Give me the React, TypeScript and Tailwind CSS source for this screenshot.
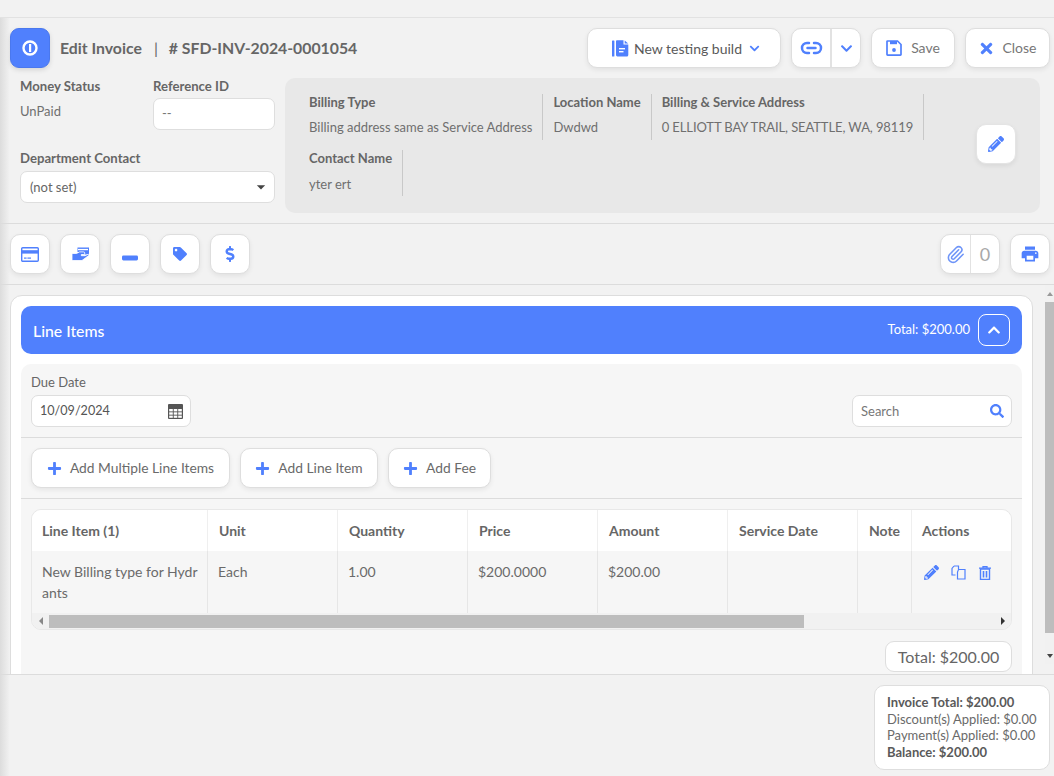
import React from "react";
import { FaPencilAlt, FaPlus, FaSearch, FaTag, FaDollarSign, FaChevronUp, FaChevronDown, FaTimes } from "react-icons/fa";
import { MdArrowDropDown, MdPrint } from "react-icons/md";
import { Paperclip } from "lucide-react";

const blue = "text-[#5080fd]";
const btn = "flex items-center justify-center bg-white border border-[#dedede] rounded-[10px] shadow-[0_2px_5px_rgba(0,0,0,0.07)]";

function Field({ label, value, gap = "mt-[8px]", extra = "" }: { label: string; value: string; gap?: string; extra?: string }) {
  return (
    <div className="h-[46px] pr-[10px] mr-[10px] border-r border-[#c8c8c8]">
      <div className="font-bold text-[13px] leading-[17px] text-[#666]">{label}</div>
      <div className={`${gap} ${extra} text-[13px] leading-[17px] text-[#6f6f6f]`}>{value}</div>
    </div>
  );
}

function Th({ w, children, pl = "pl-[11px]", last }: { w: string; children: React.ReactNode; pl?: string; last?: boolean }) {
  return (
    <div className={`${w} ${pl} shrink-0 h-full flex items-center font-bold text-[14px] text-[#666] ${last ? "" : "border-r border-[#efefef]"}`}>{children}</div>
  );
}

function Td({ w, children, last }: { w: string; children?: React.ReactNode; last?: boolean }) {
  return (
    <div className={`${w} shrink-0 h-full pl-[10px] pt-[10px] text-[14px] leading-[21px] text-[#6a6a6a] ${last ? "" : "border-r border-[#e6e6e6]"}`}>{children}</div>
  );
}

export default function App() {
  return (
    <div className="relative w-[1054px] h-[776px] overflow-hidden bg-[#f2f2f2] flex flex-col font-['Lato',sans-serif] text-[#666]">
      <div className="h-[18px] shrink-0 border-b border-[#e2e2e2]" />

      <div className="h-[206px] shrink-0 border-b border-[#dcdcdc] pl-[10px] pr-[4px]">
        <div className="flex items-start pt-[10px]">
          <div className="w-[40px] h-[40px] rounded-[9px] bg-[#5080fd] border border-[#4a78ee] flex items-center justify-center text-white shadow-[0_2px_5px_rgba(0,0,0,0.12)]">
            <svg width="16" height="16" viewBox="0 0 16 16"><circle cx="8" cy="8" r="6.5" fill="none" stroke="#fff" strokeWidth="2.4" /><rect x="7" y="4" width="2.2" height="8" fill="#fff" /></svg>
          </div>
          <div className="ml-[10px] h-[40px] flex items-center font-bold text-[15.8px] text-[#666] whitespace-pre">Edit Invoice<span className="ml-[12px] mr-[11px] font-normal">|</span># SFD-INV-2024-0001054</div>
          <div className="ml-auto flex gap-[10px]">
            <div className={`${btn} w-[194px] h-[40px] !justify-start pl-[24px] text-[14px] text-[#5a5a5a]`}>
              <svg width="17" height="17" viewBox="0 0 17 17" className={blue} fill="currentColor"><rect x="0" y="0.5" width="2.4" height="16" rx="0.6" /><path d="M4 1.2a.9.9 0 0 1 .9-.9h6.6v4.2h4.8v10.4a1.5 1.5 0 0 1-1.5 1.5H5.4a1.4 1.4 0 0 1-1.4-1.4z" /><path d="M12.7.5l3.5 3h-3.5z" /><rect x="7" y="8" width="6" height="1.4" fill="#fff" /><rect x="7" y="11" width="4.5" height="1.4" fill="#fff" /></svg>
              <span className="ml-[5px] mt-[1px]">New testing build</span>
              <FaChevronDown className={`${blue} text-[11px] ml-[7px]`} />
            </div>
            <div className={`${btn} w-[70px] h-[40px]`}>
              <div className="w-[40px] h-full flex items-center justify-center border-r-2 border-[#e2e2e2]">
                <svg width="23" height="14" viewBox="0 0 23 14" fill="none" stroke="currentColor" strokeWidth="2.5" strokeLinecap="round" className={blue}><path d="M9 2H7a5 5 0 0 0 0 10h2" /><path d="M14 2h2a5 5 0 0 1 0 10h-2" /><path d="M7.5 7h8" /></svg>
              </div>
              <div className="flex-1 flex items-center justify-center"><FaChevronDown className={`${blue} text-[13px]`} /></div>
            </div>
            <div className={`${btn} w-[84px] h-[40px] gap-[9px] text-[14px] text-[#777]`}>
              <svg width="16" height="16" viewBox="0 0 16 16" className={blue}><path d="M1.5 1h10l3.5 3.5v10a.6.6 0 0 1-.6.6H1.6a.6.6 0 0 1-.6-.6V1.5A.5.5 0 0 1 1.5 1z" fill="none" stroke="currentColor" strokeWidth="1.7" /><rect x="4" y="1" width="7" height="3.2" fill="currentColor" /><circle cx="8" cy="10" r="1.9" fill="currentColor" /></svg>
              <span className="-mt-[2px]">Save</span>
            </div>
            <div className={`${btn} w-[85px] h-[40px] gap-[7px] text-[14px] text-[#777]`}><FaTimes className={`${blue} text-[17px]`} /><span className="-mt-[2px]">Close</span></div>
          </div>
        </div>

        <div className="flex mt-[10px]">
          <div className="w-[265px] shrink-0 pl-[10px] grid grid-cols-[133px_122px] grid-rows-[72px_62px]">
            <div>
              <div className="font-bold text-[13.15px] leading-[17px] text-[#666]">Money Status</div>
              <div className="mt-[8px] text-[13px] leading-[17px] text-[#6f6f6f]">UnPaid</div>
            </div>
            <div>
              <div className="font-bold text-[13.15px] leading-[17px] text-[#666]">Reference ID</div>
              <div className="mt-[3px] h-[32px] bg-white border border-[#dedede] rounded-[7px] flex items-center pl-[8px] text-[13px] text-[#777]">--</div>
            </div>
            <div className="col-span-2">
              <div className="font-bold text-[13.15px] leading-[17px] text-[#666]">Department Contact</div>
              <div className="mt-[4px] h-[32px] bg-white border border-[#dedede] rounded-[7px] flex items-center pl-[9px] pr-[3px] text-[13px] text-[#666]">
                <span className="mt-[1px]">(not set)</span><MdArrowDropDown className="ml-auto text-[20px] text-[#444]" />
              </div>
            </div>
          </div>
          <div className="ml-[10px] w-[755px] h-[135px] bg-[#e8e8e8] rounded-[10px] flex items-center pl-[24px] pr-[24px]">
            <div className="flex-1 h-full pt-[16px]">
              <div className="flex">
                <Field label="Billing Type" value="Billing address same as Service Address" />
                <Field label="Location Name" value="Dwdwd" />
                <Field label="Billing & Service Address" value="0 ELLIOTT BAY TRAIL, SEATTLE, WA, 98119" extra="tracking-[-0.1px]" />
              </div>
              <div className="flex mt-[10px]">
                <Field label="Contact Name" value="yter ert" gap="mt-[9px]" />
              </div>
            </div>
            <div className={`${btn} shrink-0 w-[40px] h-[40px] border-[#e4e4e4] -mt-[3px]`}><FaPencilAlt className={`${blue} text-[16px]`} /></div>
          </div>
        </div>
      </div>

      <div className="h-[61px] shrink-0 border-b border-[#dcdcdc] flex items-center pl-[10px] pr-[4px] gap-[10px]">
        <div className={`${btn} w-[40px] h-[40px]`}>
          <svg width="18" height="15" viewBox="0 0 18 15" className={blue}><rect x="0.7" y="0.7" width="16.6" height="13.6" rx="1" fill="none" stroke="currentColor" strokeWidth="1.4" /><rect x="1" y="3.2" width="16" height="3.4" fill="currentColor" /><rect x="3" y="10.5" width="2.6" height="1.2" fill="currentColor" /><rect x="6.4" y="10.5" width="3.6" height="1.2" fill="currentColor" /></svg>
        </div>
        <div className={`${btn} w-[40px] h-[40px]`}>
          <svg width="17" height="14" viewBox="0 0 17 14" className={blue} fill="currentColor"><path d="M5.5 .5h11.5v7h-4.2l-1-2.6H5.5z" /><rect x="6" y="1.9" width="10" height="1.3" fill="#fff" /><path d="M0 6.5h4.5l3-1.6h4a1.3 1.3 0 0 1 0 2.6H9.3v1.2h3.7l3-1.4c1-.4 1.4.8.6 1.3L10 13.5H0z" stroke="#fff" strokeWidth="0.8" /></svg>
        </div>
        <div className={`${btn} w-[40px] h-[40px]`}>
          <svg width="16" height="16" viewBox="0 0 16 16" className={`${blue} mt-[8px]`}><rect x="0" y="5.5" width="16" height="5" rx="1.4" fill="currentColor" /></svg>
        </div>
        <div className={`${btn} w-[40px] h-[40px]`}><FaTag className={`${blue} text-[14px]`} /></div>
        <div className={`${btn} w-[40px] h-[40px]`}><FaDollarSign className={`${blue} text-[16px]`} /></div>
        <div className={`${btn} w-[60px] h-[40px] ml-auto`}>
          <div className="w-[30px] h-full flex items-center justify-center border-r border-[#e2e2e2]"><Paperclip size={19} strokeWidth={2} className="text-[#6f95f8]" /></div>
          <div className="flex-1 text-center text-[18px] text-[#a8a8a8]">0</div>
        </div>
        <div className={`${btn} w-[40px] h-[40px]`}><MdPrint className={`${blue} text-[20px]`} /></div>
      </div>

      <div className="flex-1 min-h-0 flex relative overflow-hidden pt-[10px] pl-[10px]">
        <div className="w-[1023px] shrink-0 h-[500px] bg-white rounded-t-[12px] border border-[#dddddd] p-[10px]">
          <div className="h-[48px] bg-[#5080fd] rounded-[10px] flex items-center pl-[12px] pr-[12px] text-white">
            <span className="text-[15.8px] font-medium mt-[1px]">Line Items</span>
            <span className="ml-auto text-[13px]">Total: $200.00</span>
            <div className="ml-[8px] w-[32px] h-[32px] border border-white rounded-[8px] flex items-center justify-center"><FaChevronUp className="text-[14px]" /></div>
          </div>
          <div className="mt-[10px] bg-[#f6f6f6] rounded-t-[10px] pb-[40px]">
            <div className="h-[74px] border-b border-[#dcdcdc] px-[10px] pt-[10px] flex items-end pb-[10px]">
              <div>
                <div className="text-[13px] leading-[17px] text-[#666]">Due Date</div>
                <div className="mt-[4px] w-[160px] h-[32px] bg-white border border-[#dedede] rounded-[7px] flex items-center pl-[8px] pr-[7px] text-[12.6px] text-[#555]">
                  <span className="mt-[1px]">10/09/2024</span>
                  <svg width="15" height="15" viewBox="0 0 15 15" className="ml-auto text-[#555]"><rect x="0" y="0" width="15" height="15" rx="1" fill="currentColor" /><g fill="#fff"><rect x="1.2" y="5" width="3.6" height="2.4" /><rect x="5.7" y="5" width="3.6" height="2.4" /><rect x="10.2" y="5" width="3.6" height="2.4" /><rect x="1.2" y="8.3" width="3.6" height="2.4" /><rect x="5.7" y="8.3" width="3.6" height="2.4" /><rect x="10.2" y="8.3" width="3.6" height="2.4" /><rect x="1.2" y="11.6" width="3.6" height="2.2" /><rect x="5.7" y="11.6" width="3.6" height="2.2" /><rect x="10.2" y="11.6" width="3.6" height="2.2" /></g></svg>
                </div>
              </div>
              <div className="ml-auto w-[160px] h-[32px] bg-white border border-[#dedede] rounded-[7px] flex items-center pl-[8px] pr-[7px] text-[13px] text-[#777]"><span className="mt-[1px]">Search</span><FaSearch className={`ml-auto ${blue} text-[14px]`} /></div>
            </div>
            <div className="h-[61px] border-b border-[#dcdcdc] px-[10px] flex items-center gap-[10px]">
              <div className={`${btn} w-[199px] h-[40px] gap-[8px] text-[13.8px] text-[#6a6a6a]`}><FaPlus className={`${blue} text-[15px]`} />Add Multiple Line Items</div>
              <div className={`${btn} w-[138px] h-[40px] gap-[8px] text-[13.8px] text-[#6a6a6a]`}><FaPlus className={`${blue} text-[15px]`} />Add Line Item</div>
              <div className={`${btn} w-[103px] h-[40px] gap-[8px] text-[13.8px] text-[#6a6a6a]`}><FaPlus className={`${blue} text-[15px]`} />Add Fee</div>
            </div>
            <div className="px-[10px] pt-[10px]">
              <div className="border border-[#e8e8e8] rounded-[10px] overflow-hidden">
                <div className="h-[41px] bg-white flex">
                  <Th w="w-[176px]" pl="pl-[10px]">Line Item (1)</Th>
                  <Th w="w-[130px]">Unit</Th>
                  <Th w="w-[130px]">Quantity</Th>
                  <Th w="w-[130px]">Price</Th>
                  <Th w="w-[130px]">Amount</Th>
                  <Th w="w-[130px]">Service Date</Th>
                  <Th w="w-[54px]">Note</Th>
                  <Th w="w-[98px]" pl="pl-[10px]" last>Actions</Th>
                </div>
                <div className="h-[62px] flex">
                  <Td w="w-[176px]"><span className="block w-[160px] break-all">New Billing type for Hydrants</span></Td>
                  <Td w="w-[130px]">Each</Td>
                  <Td w="w-[130px]">1.00</Td>
                  <Td w="w-[130px]">$200.0000</Td>
                  <Td w="w-[130px]">$200.00</Td>
                  <Td w="w-[130px]" />
                  <Td w="w-[54px]" />
                  <Td w="w-[98px]" last>
                    <div className={`flex items-center gap-[12px] pt-[4px] pl-[2px] ${blue}`}>
                      <FaPencilAlt className="text-[15px]" />
                      <svg width="15" height="15" viewBox="0 0 15 15" fill="none" stroke="currentColor" strokeWidth="1.2"><path d="M3 1h4.5v3M3 1L1 3.5V10h3.5" /><path d="M7.5 4.5H14V14H6.5V7z" fill="#f6f6f6" /></svg>
                      <svg width="12" height="14" viewBox="0 0 12 14" fill="none" stroke="currentColor" className="ml-[1px]"><path d="M0 2.2h12M4 2V.7h4V2" strokeWidth="1.3" /><path d="M1.5 3h9v10.4h-9z" strokeWidth="1.4" /><path d="M4.5 5v6.5M7.5 5v6.5" strokeWidth="1.6" /></svg>
                    </div>
                  </Td>
                </div>
                <div className="h-[16px] bg-[#f1f1f1] flex items-center">
                  <div className="w-[17px] flex justify-center"><div className="border-y-[4px] border-y-transparent border-r-[4px] border-r-[#888]" /></div>
                  <div className="w-[755px] h-[13px] bg-[#bdbdbd]" />
                  <div className="ml-auto w-[17px] flex justify-center"><div className="border-y-[4px] border-y-transparent border-l-[4px] border-l-[#333]" /></div>
                </div>
              </div>
              <div className="flex justify-end mt-[11px]">
                <div className="w-[127px] h-[31px] bg-white border border-[#dedede] rounded-[9px] flex items-center justify-center text-[16px] text-[#666]">Total: $200.00</div>
              </div>
            </div>
          </div>
        </div>
        <div className="ml-auto w-[9px] h-full -mt-[10px] flex flex-col items-center bg-[#f1f1f1]">
          <div className="h-[17px] w-full flex items-center justify-center"><div className="border-x-[3px] border-x-transparent border-b-[4px] border-b-[#999]" /></div>
          <div className="w-full h-[331px] bg-[#bdbdbd]" />
          <div className="mt-auto h-[17px] w-full flex items-center justify-center"><div className="border-x-[3px] border-x-transparent border-t-[4px] border-t-[#444]" /></div>
        </div>
      </div>

      <div className="h-[102px] shrink-0 border-t border-[#dcdcdc] relative z-10 bg-[#f2f2f2] flex justify-end pt-[10px] pr-[4px]">
        <div className="w-[176px] h-[85px] bg-white border border-[#dedede] rounded-[10px] pl-[12px] pt-[8px] text-[13px] leading-[16.67px] text-[#6a6a6a]">
          <div className="font-bold text-[#5a5a5a]">Invoice Total: $200.00</div>
          <div>Discount(s) Applied: $0.00</div>
          <div>Payment(s) Applied: $0.00</div>
          <div className="font-bold text-[#5a5a5a]">Balance: $200.00</div>
        </div>
      </div>

      <div className="absolute left-0 top-[18px] bottom-0 w-[10px] z-20 pointer-events-none bg-gradient-to-r from-[#dcdcdc] to-transparent" />
    </div>
  );
}
